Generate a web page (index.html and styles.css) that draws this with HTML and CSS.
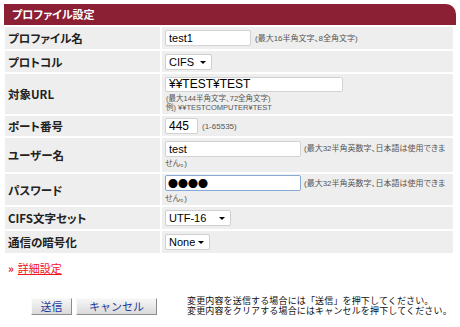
FILE: index.html
```html
<!DOCTYPE html>
<html lang="ja">
<head>
  <meta charset="UTF-8" />
  <title>プロファイル設定</title>
  <link rel="stylesheet" href="styles.css">
</head>
<body>
  <div class="panel">
    <div class="panel-head">プロファイル設定</div>
    <table class="form-table">
      <tr class="row-name">
        <th>プロファイル名</th>
        <td><input type="text" class="w-name" value="test1" /><span class="hint">(最大16半角文字、8全角文字)</span></td>
      </tr>
      <tr class="row-proto">
        <th>プロトコル</th>
        <td><span class="select"><select class="w-proto"><option>CIFS</option><option>FTP</option></select></span></td>
      </tr>
      <tr class="row-url">
        <th>対象URL</th>
        <td>
          <input type="text" class="w-url" value="¥¥TEST¥TEST" />
          <div class="hint block">(最大144半角文字、72全角文字)<br>例) ¥¥TESTCOMPUTER¥TEST</div>
        </td>
      </tr>
      <tr class="row-port">
        <th>ポート番号</th>
        <td><input type="text" class="w-port" value="445" /><span class="hint">(1-65535)</span></td>
      </tr>
      <tr class="row-user">
        <th>ユーザー名</th>
        <td><input type="text" class="w-user" value="test" /><span class="hint">(最大32半角英数字、日本語は使用できません。)</span></td>
      </tr>
      <tr class="row-pass">
        <th>パスワード</th>
        <td><input type="text" class="w-user pass" value="●●●●" /><span class="hint">(最大32半角英数字、日本語は使用できません。)</span></td>
      </tr>
      <tr class="row-charset">
        <th>CIFS文字セット</th>
        <td><span class="select"><select class="w-charset"><option>UTF-16</option><option>SJIS</option></select></span></td>
      </tr>
      <tr class="row-crypt">
        <th>通信の暗号化</th>
        <td><span class="select"><select class="w-crypt"><option>None</option><option>SMB3</option></select></span></td>
      </tr>
    </table>
  </div>

  <div class="more"><span class="mark">»</span><a href="#">詳細設定</a></div>

  <div class="actions">
    <button type="button" class="btn btn-send">送信</button>
    <button type="button" class="btn btn-cancel">キャンセル</button>
    <p class="help">変更内容を送信する場合には「送信」を押下してください。<br>変更内容をクリアする場合にはキャンセルを押下してください。</p>
  </div>
</body>
</html>
```

FILE: styles.css
```css
body {
  margin: 0;
  padding: 4px;
  font-family: "Noto Sans CJK JP", "Liberation Sans", sans-serif;
  font-feature-settings: "palt";
  color: #222;
  background: #fff;
}

.panel {
  width: 452px;
}

.panel-head {
  height: 21px;
  line-height: 21px;
  padding-left: 8px;
  background: #8b2034;
  color: #fff;
  font-size: 11px;
  font-weight: bold;
  border-top-right-radius: 10px;
}

.form-table {
  width: 452px;
  margin-left: -1px;
  border-spacing: 2px;
}

.form-table th,
.form-table td {
  padding: 0 3px;
  background: #eeeeee;
  vertical-align: middle;
}

.form-table th {
  width: 152px;
  padding-right: 0;
  text-align: left;
  font-size: 11.5px;
  line-height: 14px;
  font-weight: bold;
  color: #222;
}

.form-table td {
  font-size: 8px;
  line-height: 11px;
}

.row-name { height: 22px; }
.row-proto { height: 21px; }
.row-url { height: 40px; }
.row-port { height: 20px; }
.row-user { height: 34px; }
.row-pass { height: 31px; }
.row-charset { height: 22px; }
.row-crypt { height: 22px; }

input {
  box-sizing: border-box;
  height: 16px;
  margin: 0;
  padding: 0 3px;
  border: 1px solid #d2d2d2;
  border-radius: 2px;
  background: #fff;
  font-family: "Liberation Sans", sans-serif;
  font-size: 12px;
  color: #000;
  vertical-align: middle;
}

.w-name { width: 86px; font-size: 11px; }
.w-url { width: 178px; height: 15px; }
.w-port { width: 33px; }
.w-user { width: 136px; font-size: 11px; }

.pass {
  border-color: #86a9d6;
  font-family: "Noto Sans CJK JP", sans-serif;
  font-size: 10px;
  padding-left: 2px;
}

.hint {
  margin-left: 4px;
  font-family: "Liberation Sans", "Noto Sans CJK JP", sans-serif;
  font-size: 8px;
  color: #555;
  vertical-align: middle;
}

.row-user .hint,
.row-pass .hint {
  margin-left: 3px;
}

.hint.block {
  display: block;
  margin: 2px 0 0 1px;
  font-size: 7.5px;
  line-height: 9px;
}

.select {
  position: relative;
  display: inline-flex;
  vertical-align: middle;
}

.select::after {
  content: "";
  position: absolute;
  top: 7px;
  right: 6px;
  border-left: 3px solid transparent;
  border-right: 3px solid transparent;
  border-top: 3px solid #000;
  pointer-events: none;
}

select {
  appearance: none;
  -webkit-appearance: none;
  box-sizing: border-box;
  height: 16px;
  margin: 0;
  padding: 0 14px 0 3px;
  border: 1px solid #cfcfcf;
  border-radius: 2px;
  background: #fff;
  font-family: "Liberation Sans", sans-serif;
  font-size: 11px;
  line-height: 14px;
  color: #000;
}

.w-proto { width: 47px; }
.w-charset { width: 66px; }
.w-crypt { width: 45px; }

.more {
  margin: 6px 0 0 4px;
  font-size: 11px;
  line-height: 14px;
}

.more .mark {
  color: #e8131b;
  font-weight: bold;
  margin-right: 4px;
}

.more a {
  color: #f0141e;
}

.actions {
  display: flex;
  align-items: center;
  gap: 4px;
  margin-top: 21px;
  padding-left: 27px;
}

.btn {
  box-sizing: border-box;
  height: 17px;
  padding: 0;
  border: 1px solid;
  border-color: #fafafa #8c8c8c #8c8c8c #fafafa;
  background: linear-gradient(#f6f6f6, #dadada);
  color: #1c3c9e;
  font-family: "Noto Sans CJK JP", sans-serif;
  font-size: 11px;
  line-height: 14px;
}

.btn-send { width: 41px; }
.btn-cancel { width: 81px; }

.help {
  margin: 0 0 0 26px;
  font-family: "Liberation Sans", "Noto Sans CJK JP", sans-serif;
  font-size: 9px;
  line-height: 10px;
  letter-spacing: 0.15px;
  white-space: nowrap;
  color: #111;
  font-feature-settings: normal;
}
```
